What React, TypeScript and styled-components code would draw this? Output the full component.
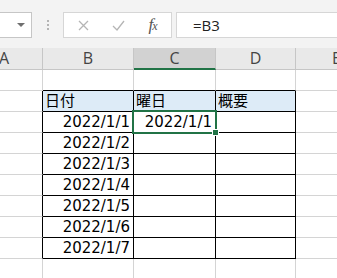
import React from "react";
import styled, { createGlobalStyle } from "styled-components";

const GlobalStyle = createGlobalStyle`
  html, body {
    margin: 0;
    padding: 0;
    background: #ffffff;
    overflow: hidden;
  }
  #root {
    width: 337px;
    height: 278px;
    overflow: hidden;
  }
`;

const GRID = "#d4d4d4";
const HEAD_LINE = "#c6c6c6";
const GREEN = "#217346";

const Window = styled.div`
  width: 337px;
  height: 278px;
  overflow: hidden;
  background: #fff;
  font-family: "DejaVu Sans", "Noto Sans CJK JP", sans-serif;
`;

const FormulaBar = styled.div`
  height: 48px;
  box-sizing: border-box;
  padding-top: 12px;
  background: #f3f3f3;
  display: flex;
  align-items: flex-start;
`;

const NameBox = styled.div`
  width: 32px;
  height: 26px;
  box-sizing: border-box;
  background: #fff;
  border: 1px solid ${HEAD_LINE};
  border-left: none;
  display: flex;
  align-items: center;
  justify-content: flex-end;
  padding-right: 6px;
`;

const Caret = styled.span`
  width: 0;
  height: 0;
  border-left: 4px solid transparent;
  border-right: 4px solid transparent;
  border-top: 4px solid #6f6f6f;
`;

const Grip = styled.div`
  width: 31px;
  height: 26px;
  display: flex;
  flex-direction: column;
  align-items: center;
  justify-content: center;
  gap: 2px;
`;

const GripDot = styled.span`
  width: 2px;
  height: 2px;
  background: #b4b4b4;
`;

const Buttons = styled.div`
  width: 109px;
  height: 26px;
  box-sizing: border-box;
  background: #fff;
  border: 1px solid #d6d6d6;
  display: flex;
  align-items: center;
`;

const ToolButton = styled.span<{ $w: number }>`
  width: ${(p) => p.$w}px;
  display: flex;
  justify-content: center;
  align-items: center;
`;

const Fx = styled.span`
  font-family: "Liberation Serif", "DejaVu Serif", serif;
  font-style: italic;
  font-size: 17px;
  color: #555;
  letter-spacing: -1px;
  small {
    font-size: 12px;
  }
`;

const Input = styled.div`
  flex: 1;
  height: 26px;
  margin-left: 4px;
  box-sizing: border-box;
  background: #fff;
  border: 1px solid #d6d6d6;
  border-right: none;
  padding-left: 16px;
  display: flex;
  align-items: center;
  font-family: "Open Sans", "Noto Sans", sans-serif;
  font-size: 15px;
  color: #222;
`;

const Sheet = styled.div`
  display: grid;
  grid-template-columns: 77px 91px 82px 80px 82px;
  margin-left: -34px;
  width: 412px;
`;

const ColHead = styled.div<{ $active?: boolean }>`
  height: 22px;
  box-sizing: border-box;
  background: ${(p) => (p.$active ? "#d2d2d2" : "#e9e9e9")};
  border-right: 1px solid ${HEAD_LINE};
  border-bottom: ${(p) => (p.$active ? `2px solid ${GREEN}` : `1px solid ${HEAD_LINE}`)};
  display: flex;
  align-items: center;
  justify-content: center;
  font-family: "Open Sans", "Noto Sans", sans-serif;
  font-size: 16px;
  color: #444;
  padding-bottom: 1px;
`;

const Cell = styled.div<{
  $right: string;
  $bottom: string;
  $fill?: string;
  $align: "left" | "right";
}>`
  position: relative;
  height: 21px;
  box-sizing: border-box;
  border-right: 1px solid ${(p) => p.$right};
  border-bottom: 1px solid ${(p) => p.$bottom};
  background: ${(p) => p.$fill || "#fff"};
  display: flex;
  align-items: center;
  justify-content: ${(p) => (p.$align === "right" ? "flex-end" : "flex-start")};
  padding: 0 3px 0 2px;
  font-size: 15px;
  line-height: 1;
  color: #000;
  white-space: nowrap;
`;

const Selection = styled.div`
  position: absolute;
  z-index: 2;
  left: -2px;
  top: -2px;
  width: 85px;
  height: 24px;
  box-sizing: border-box;
  border: 2px solid ${GREEN};
  pointer-events: none;
`;

const Handle = styled.span`
  position: absolute;
  right: -4px;
  bottom: -4px;
  width: 5px;
  height: 5px;
  background: ${GREEN};
  border: 1px solid #fff;
`;

const cols = ["A", "B", "C", "D", "E"];

const rows: string[][] = [
  ["", "", "", "", ""],
  ["", "日付", "曜日", "概要", ""],
  ["", "2022/1/1", "2022/1/1", "", ""],
  ["", "2022/1/2", "", "", ""],
  ["", "2022/1/3", "", "", ""],
  ["", "2022/1/4", "", "", ""],
  ["", "2022/1/5", "", "", ""],
  ["", "2022/1/6", "", "", ""],
  ["", "2022/1/7", "", "", ""],
  ["", "", "", "", ""],
];

// table spans rows 1..8 (0-based) and columns 1..3
const inTable = (r: number, c: number) => r >= 1 && r <= 8 && c >= 1 && c <= 3;

export default function App() {
  return (
    <Window>
      <GlobalStyle />
      <FormulaBar>
        <NameBox>
          <Caret />
        </NameBox>
        <Grip>
          <GripDot />
          <GripDot />
          <GripDot />
        </Grip>
        <Buttons>
          <ToolButton $w={38}>
            <svg width="11" height="11" viewBox="0 0 11 11">
              <path d="M1 1L10 10M10 1L1 10" stroke="#b5b5b5" strokeWidth="1.3" fill="none" />
            </svg>
          </ToolButton>
          <ToolButton $w={32}>
            <svg width="13" height="11" viewBox="0 0 13 11">
              <path d="M1 6L5 10L12 1" stroke="#b5b5b5" strokeWidth="1.3" fill="none" />
            </svg>
          </ToolButton>
          <ToolButton $w={37}>
            <Fx>
              f<small>x</small>
            </Fx>
          </ToolButton>
        </Buttons>
        <Input>=B3</Input>
      </FormulaBar>
      <Sheet>
        {cols.map((c) => (
          <ColHead key={c} $active={c === "C"}>
            {c}
          </ColHead>
        ))}
        {rows.map((row, r) =>
          row.map((text, c) => {
            const black = inTable(r, c) || inTable(r, c + 1);
            const blackBottom = inTable(r, c) || inTable(r + 1, c);
            const isHead = r === 1 && inTable(r, c);
            return (
              <Cell
                key={`${r}-${c}`}
                $right={black ? "#000" : GRID}
                $bottom={blackBottom ? "#000" : GRID}
                $fill={isHead ? "#ddebf7" : undefined}
                $align={isHead ? "left" : "right"}
              >
                {text}
                {r === 2 && c === 2 && (
                  <Selection>
                    <Handle />
                  </Selection>
                )}
              </Cell>
            );
          })
        )}
      </Sheet>
    </Window>
  );
}
